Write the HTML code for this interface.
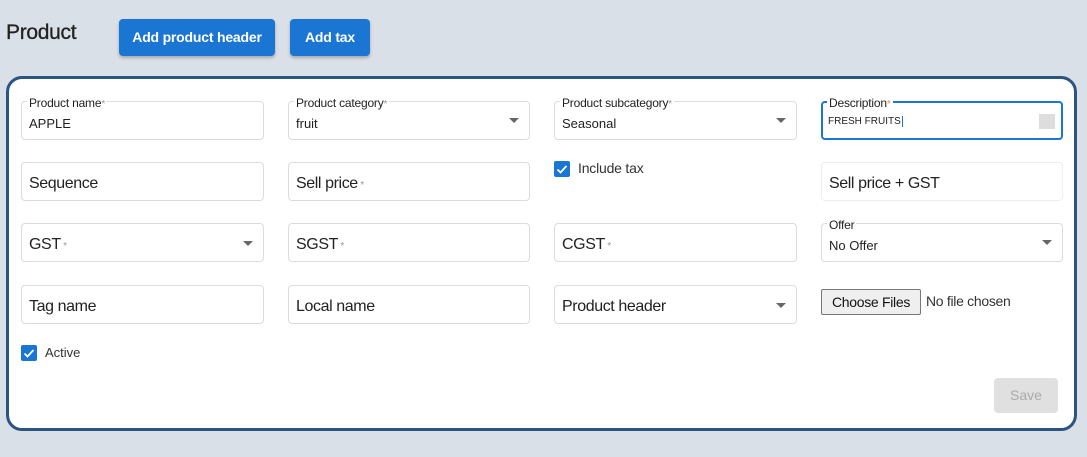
<!DOCTYPE html>
<html><head><style>
*{box-sizing:border-box;margin:0;padding:0}
body{width:1087px;height:457px;background:#dae0e7;font-family:"Liberation Sans",sans-serif;position:relative;overflow:hidden;color:#222}
.a{position:absolute}
.btn{position:absolute;background:#1a76d2;color:#fff;font-weight:bold;font-size:14px;border-radius:4px;text-align:center;line-height:37px;box-shadow:0 2px 3px rgba(0,0,0,.25);letter-spacing:-0.2px}
.card{position:absolute;left:6px;top:76px;width:1071px;height:355px;background:#fff;border:3px solid #2b5481;border-radius:16px}
.f{position:absolute;height:39px;border:1px solid #dcdcdc;border-radius:4px;background:#fff}
.f .ph{position:absolute;left:7px;top:12px;font-size:16px;color:#222;letter-spacing:-0.4px}
.f .lb{position:absolute;left:5px;top:-5px;background:#fff;padding:0 2px;font-size:12px;color:#222;line-height:12px;letter-spacing:-0.2px}
.f .v{position:absolute;left:7px;top:14px;font-size:13px;color:#222}
.st{color:#999;font-size:10px}
.arr{position:absolute;right:10px;top:16px;width:0;height:0;border-left:5px solid transparent;border-right:5px solid transparent;border-top:5px solid #666}
.cb{position:absolute;width:16px;height:16px;background:#1a76d2;border-radius:2px}
</style></head><body>
<div class="a" style="left:6px;top:21px;font-size:21px;color:#222;letter-spacing:-0.3px;-webkit-text-stroke:0.3px #222">Product</div>
<div class="btn" style="left:119px;top:19px;width:156px">Add product header</div>
<div class="btn" style="left:290px;top:19px;width:80px">Add tax</div>
<div class="card"></div>

<div class="f" style="left:21px;top:101px;width:243px"><span class="lb">Product name<span class="st">*</span></span><span class="v">APPLE</span></div>
<div class="f" style="left:288px;top:101px;width:242px"><span class="lb">Product category<span class="st">*</span></span><span class="v">fruit</span><div class="arr"></div></div>
<div class="f" style="left:554px;top:101px;width:243px"><span class="lb">Product subcategory<span class="st">*</span></span><span class="v">Seasonal</span><div class="arr"></div></div>
<div class="f" style="left:821px;top:101px;width:242px;border:2px solid #1a76d2"><span class="lb" style="left:4px;top:-6px">Description<span class="st" style="color:#f08a3a">*</span></span><span class="v" style="left:5px;top:13px;font-size:10px">FRESH FRUITS<span style="border-left:1px solid #1a76d2;margin-left:1px"></span></span><div class="a" style="right:6px;top:11px;width:16px;height:15px;background:#ddd"></div></div>

<div class="f" style="left:21px;top:162px;width:243px"><span class="ph">Sequence</span></div>
<div class="f" style="left:288px;top:162px;width:242px"><span class="ph">Sell price<span class="st"> *</span></span></div>
<div class="cb" style="left:554px;top:161px"><svg width="16" height="16"><path d="M3.5 8.5l3 3 6-6.5" stroke="#fff" stroke-width="1.8" fill="none"/></svg></div>
<div class="a" style="left:578px;top:160px;font-size:14px;color:#333;letter-spacing:-0.2px">Include tax</div>
<div class="f" style="left:821px;top:162px;width:242px;border-color:#eee"><span class="ph">Sell price + GST</span></div>

<div class="f" style="left:21px;top:223px;width:243px"><span class="ph">GST<span class="st"> *</span></span><div class="arr" style="top:17px"></div></div>
<div class="f" style="left:288px;top:223px;width:242px"><span class="ph">SGST<span class="st"> *</span></span></div>
<div class="f" style="left:554px;top:223px;width:243px"><span class="ph">CGST<span class="st"> *</span></span></div>
<div class="f" style="left:821px;top:223px;width:242px"><span class="lb">Offer</span><span class="v" style="top:14px">No Offer</span><div class="arr"></div></div>

<div class="f" style="left:21px;top:285px;width:243px"><span class="ph">Tag name</span></div>
<div class="f" style="left:288px;top:285px;width:242px"><span class="ph">Local name</span></div>
<div class="f" style="left:554px;top:285px;width:243px"><span class="ph">Product header</span><div class="arr" style="top:17px"></div></div>
<div class="a" style="left:821px;top:289px;width:100px;height:26px;border:1px solid #777;background:#efefef;border-radius:2px;font-size:14px;text-align:center;line-height:24px;color:#111;letter-spacing:-0.3px">Choose Files</div>
<div class="a" style="left:926px;top:293px;font-size:14px;color:#333;letter-spacing:-0.3px">No file chosen</div>

<div class="cb" style="left:21px;top:345px"><svg width="16" height="16"><path d="M3.5 8.5l3 3 6-6.5" stroke="#fff" stroke-width="1.8" fill="none"/></svg></div>
<div class="a" style="left:45px;top:345px;font-size:13px;color:#333">Active</div>

<div class="a" style="left:994px;top:378px;width:64px;height:35px;background:#e0e0e0;border-radius:4px;color:#aaa;font-size:14px;text-align:center;line-height:35px">Save</div>
</body></html>
